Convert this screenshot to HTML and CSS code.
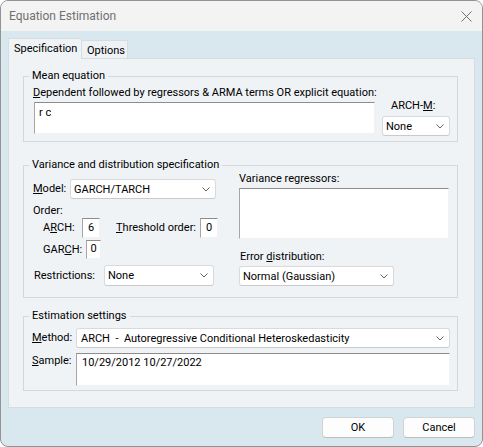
FILE: index.html
```html
<!DOCTYPE html>
<html>
<head>
<meta charset="utf-8">
<link rel="stylesheet" href="styles.css">
</head>
<body>
<div class="window">
  <div class="titlebar">
    <span class="title">Equation Estimation</span>
    <svg class="close" width="11" height="11" viewBox="0 0 11 11"><path d="M0.5 0.5L10.5 10.5M10.5 0.5L0.5 10.5" stroke="#6e6e6e" stroke-width="1" fill="none"/></svg>
  </div>
  <div class="client">
    <div class="tabs">
      <div class="tab active">Specification</div>
      <div class="tab">Options</div>
    </div>
    <div class="panel">
      <fieldset class="group">
        <legend>Mean equation</legend>
        <div class="mean-body">
          <div class="mean-left">
            <div class="label"><u>D</u>ependent followed by regressors &amp; ARMA terms OR explicit equation:</div>
            <div class="edit mean-edit">r c</div>
          </div>
          <div class="mean-right">
            <div class="label archm-label">ARCH-<u>M</u>:</div>
            <div class="combo archm-combo"><span>None</span><svg class="chev" width="8" height="5" viewBox="0 0 8 5"><path d="M0.5 0.5L4 4L7.5 0.5" stroke="#606060" fill="none"/></svg></div>
          </div>
        </div>
      </fieldset>

      <fieldset class="group variance">
        <legend>Variance and distribution specification</legend>
        <div class="var-body">
          <div class="var-left">
            <div class="row model-row">
              <div class="label model-label"><u>M</u>odel:</div>
              <div class="combo model-combo"><span>GARCH/TARCH</span><svg class="chev" width="8" height="5" viewBox="0 0 8 5"><path d="M0.5 0.5L4 4L7.5 0.5" stroke="#606060" fill="none"/></svg></div>
            </div>
            <div class="label order-label">Order:</div>
            <div class="row arch-row">
              <div class="label arch-label">A<u>R</u>CH:</div>
              <div class="edit num">6</div>
              <div class="label thr-label"><u>T</u>hreshold order:</div>
              <div class="edit num">0</div>
            </div>
            <div class="row garch-row">
              <div class="label garch-label">GAR<u>C</u>H:</div>
              <div class="edit num garch-num">0</div>
            </div>
            <div class="row restr-row">
              <div class="label restr-label">Restrictions:</div>
              <div class="combo restr-combo"><span>None</span><svg class="chev" width="8" height="5" viewBox="0 0 8 5"><path d="M0.5 0.5L4 4L7.5 0.5" stroke="#606060" fill="none"/></svg></div>
            </div>
          </div>
          <div class="var-right">
            <div class="label">Variance re<u>g</u>ressors:</div>
            <div class="edit varreg-edit"></div>
            <div class="label err-label">Error <u>d</u>istribution:</div>
            <div class="combo err-combo"><span>Normal (Gaussian)</span><svg class="chev" width="8" height="5" viewBox="0 0 8 5"><path d="M0.5 0.5L4 4L7.5 0.5" stroke="#606060" fill="none"/></svg></div>
          </div>
        </div>
      </fieldset>

      <fieldset class="group estimation">
        <legend>Estimation settings</legend>
        <div class="est-body">
          <div class="row method-row">
            <div class="label est-label"><u>M</u>ethod:</div>
            <div class="combo method-combo"><span>ARCH&nbsp; -&nbsp; Autoregressive Conditional Heteroskedasticity</span><svg class="chev" width="8" height="5" viewBox="0 0 8 5"><path d="M0.5 0.5L4 4L7.5 0.5" stroke="#606060" fill="none"/></svg></div>
          </div>
          <div class="row sample-row">
            <div class="label est-label sample-label"><u>S</u>ample:</div>
            <div class="edit sample-edit">10/29/2012 10/27/2022</div>
          </div>
        </div>
      </fieldset>
    </div>
    <div class="buttons">
      <div class="btn">OK</div>
      <div class="btn">Cancel</div>
    </div>
  </div>
</div>
</body>
</html>
```

FILE: styles.css
```css
body {
  margin: 0;
  font-family: Roboto, "Liberation Sans", Arial, sans-serif;
  font-size: 11px;
  color: #000;
}

.window {
  width: 483px;
  height: 447px;
  box-sizing: border-box;
  border: 1px solid #939393;
  border-radius: 8px;
  overflow: hidden;
  background: #d9e7ef;
  display: flex;
  flex-direction: column;
}

.titlebar {
  height: 30px;
  flex: none;
  background: #f3f3f3;
  display: flex;
  align-items: center;
  justify-content: space-between;
  padding: 0 10px 0 8px;
}

.title {
  font-size: 12px;
  line-height: 14px;
  color: #707070;
}

.close {
  display: block;
}

.client {
  flex: 1;
  padding: 7px 7px 0 7px;
}

.tabs {
  display: flex;
  align-items: flex-end;
  height: 20px;
}

.tab {
  box-sizing: border-box;
  height: 18px;
  width: 46px;
  background: #eef2f5;
  border: 1px solid #d7dce0;
  border-bottom: none;
  border-left: none;
  line-height: 14px;
  padding: 3px 0 0 5px;
}

.tab.active {
  width: 74px;
  height: 21px;
  margin-bottom: -1px;
  background: #eff3f6;
  border-left: 1px solid #d7dce0;
  padding: 3px 0 0 5px;
  position: relative;
  z-index: 1;
}

.panel {
  box-sizing: border-box;
  height: 350px;
  background: #eff3f6;
  border: 1px solid #d7dce0;
  padding: 10px 16px 0 14px;
}

.group {
  margin: 0;
  padding: 0;
  border: 1px solid #d3d8dc;
  min-width: 0;
}

.group legend {
  margin-left: 5px;
  padding: 0 3px;
  line-height: 14px;
}

.label {
  line-height: 14px;
  white-space: nowrap;
}

.edit {
  box-sizing: border-box;
  background: #fff;
  border-style: solid;
  border-width: 1px;
  border-color: #8c8c8c #f2f2f2 #f2f2f2 #a6a6a6;
}

.combo {
  box-sizing: border-box;
  height: 20px;
  background: #fff;
  border: 1px solid #dadada;
  border-bottom-color: #cacaca;
  border-radius: 3px;
  display: flex;
  align-items: center;
  justify-content: space-between;
  padding: 0 5px 0 3px;
  white-space: nowrap;
}

.chev {
  display: block;
  flex: none;
}

.row {
  display: flex;
  align-items: center;
}

/* Mean equation */
.mean-body {
  display: flex;
  padding: 0 0 5px 9px;
}

.mean-left {
  width: 342px;
  padding-top: 3px;
}

.mean-edit {
  margin: 2px 0 0 1px;
  width: 341px;
  height: 32px;
  padding: 3px 0 0 4px;
}

.mean-right {
  margin-left: 7px;
  width: 68px;
  padding-top: 16px;
}

.archm-label {
  padding-left: 9px;
}

.archm-combo {
  margin-top: 3px;
}

/* Variance */
.variance {
  margin-top: 16px;
}

.var-body {
  display: flex;
  padding: 0 0 11px 9px;
}

.var-left {
  width: 206px;
}

.model-row {
  margin-top: 7px;
}

.model-label {
  width: 37px;
}

.model-combo {
  width: 146px;
}

.order-label {
  margin-top: 5px;
}

.arch-row {
  height: 20px;
}

.arch-label {
  width: 39px;
  margin-left: 10px;
}

.num {
  width: 18px;
  height: 20px;
  text-align: center;
  line-height: 17px;
}

.thr-label {
  margin-left: 16px;
  width: 84px;
}

.garch-row {
  margin-top: 2px;
}

.garch-label {
  margin-left: 10px;
  width: 43px;
}

.garch-num {
  height: 19px;
  width: 15px;
  line-height: 16px;
}

.restr-row {
  margin-top: 6px;
}

.restr-label {
  width: 70px;
  margin-left: 1px;
}

.restr-combo {
  width: 110px;
  height: 21px;
}

.var-right {
  width: 210px;
}

.varreg-edit {
  margin-top: 2px;
  width: 210px;
  height: 51px;
}

.err-label {
  margin-top: 11px;
  margin-left: 1px;
}

.err-combo {
  margin-top: 2px;
  width: 155px;
}

/* Estimation */
.estimation {
  margin-top: 11px;
}

.est-body {
  padding: 0 0 4px 8px;
}

.method-row {
  margin-top: 5px;
}

.est-label {
  width: 44px;
}

.method-combo {
  width: 374px;
  padding-left: 4px;
}

.sample-row {
  margin-top: 5px;
  align-items: flex-start;
}

.sample-label {
  margin-top: 1px;
}

.sample-edit {
  width: 374px;
  height: 33px;
  padding: 2px 0 0 5px;
  line-height: 14px;
}

/* Buttons */
.buttons {
  display: flex;
  justify-content: flex-end;
  gap: 9px;
  margin-top: 9px;
}

.btn {
  box-sizing: border-box;
  width: 72px;
  height: 21px;
  background: #fdfdfd;
  border: 1px solid #d3d3d3;
  border-bottom-color: #bdbdbd;
  border-radius: 4px;
  display: flex;
  align-items: center;
  justify-content: center;
  font-size: 11px;
}
```
